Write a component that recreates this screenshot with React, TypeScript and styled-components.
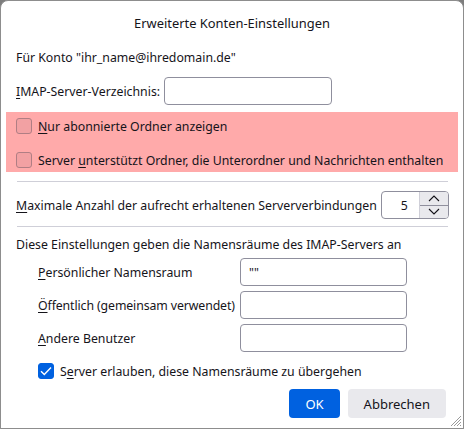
import React from 'react';
import styled, { createGlobalStyle } from 'styled-components';

const GlobalStyle = createGlobalStyle`
  html, body {
    margin: 0;
    padding: 0;
    background: #7d7d7d;
  }
  body {
    font-family: 'Noto Sans', 'Open Sans', sans-serif;
    font-size: 12.3px;
    color: #15141a;
  }
`;

const Window = styled.div`
  position: relative;
  box-sizing: border-box;
  width: 464px;
  height: 429px;
  background: #ffffff;
  border: 1px solid #8d8d8d;
  border-radius: 8px 8px 0 0;
  display: flex;
  flex-direction: column;
  overflow: hidden;
`;

const Title = styled.div`
  height: 43px;
  display: flex;
  align-items: center;
  justify-content: center;
  font-size: 12.9px;
`;

const Content = styled.div`
  display: flex;
  flex-direction: column;
  padding: 0 15px;
`;

const Line = styled.div<{ $height?: number }>`
  height: ${(p) => p.$height ?? 26}px;
  display: flex;
  align-items: center;
  gap: 4px;
  white-space: nowrap;
`;

const Key = styled.span`
  text-decoration: underline;
  text-underline-offset: 2px;
`;

const TextInput = styled.div<{ $width: number }>`
  box-sizing: border-box;
  width: ${(p) => p.$width}px;
  height: 28px;
  border: 1px solid #8f8f9d;
  border-radius: 4px;
  background: #fff;
  display: flex;
  align-items: center;
  padding-left: 8px;
  font-size: 12px;
`;

const Highlight = styled.div`
  box-sizing: border-box;
  height: 60px;
  margin: 7px -10px 0 -10px;
  padding: 2px 10px 0 10px;
  background: #ffaaaa;
  display: flex;
  flex-direction: column;
  gap: 10px;
`;

const CheckRow = styled.label<{ $indent?: boolean }>`
  height: 24px;
  display: flex;
  align-items: center;
  gap: 6px;
  padding-left: ${(p) => (p.$indent ? '22px' : '0')};
  white-space: nowrap;
`;

const Box = styled.span<{ $checked?: boolean }>`
  box-sizing: border-box;
  width: 16px;
  height: 16px;
  border-radius: 3px;
  flex: none;
  display: flex;
  align-items: center;
  justify-content: center;
  border: 1px solid ${(p) => (p.$checked ? '#0061e0' : '#b07e84')};
  background: ${(p) => (p.$checked ? '#0061e0' : '#f2a1a3')};
`;

const Separator = styled.hr<{ $after: number }>`
  border: none;
  border-top: 1px solid #cfcfd8;
  margin: 9px 0 ${(p) => p.$after}px 1px;
`;

const SpinRow = styled.div`
  display: flex;
  align-items: center;
  justify-content: space-between;
  gap: 4px;
  height: 28px;
  white-space: nowrap;
`;

const Spinner = styled.div`
  box-sizing: border-box;
  flex: none;
  width: 68px;
  height: 28px;
  border: 1px solid #8f8f9d;
  border-radius: 4px;
  display: flex;
  overflow: hidden;
`;

const SpinValue = styled.div`
  flex: 1;
  display: flex;
  align-items: center;
  justify-content: flex-end;
  padding-right: 11px;
`;

const SpinButtons = styled.div`
  width: 28px;
  display: flex;
  flex-direction: column;
  border-left: 1px solid #cfcfd8;
`;

const SpinButton = styled.div<{ $top?: boolean }>`
  flex: 1;
  background: #e9e9ed;
  display: flex;
  align-items: center;
  justify-content: center;
  border-bottom: ${(p) => (p.$top ? '1px solid #8f8f9d' : 'none')};
`;

const NamespaceGrid = styled.div`
  display: grid;
  grid-template-columns: 202px 167px;
  row-gap: 5px;
  padding-left: 22px;
  margin-top: 5px;
  align-items: center;
  white-space: nowrap;
`;

const Footer = styled.div`
  display: flex;
  justify-content: flex-end;
  gap: 8px;
  padding-right: 2px;
  margin-top: 6px;
`;

const Button = styled.button<{ $primary?: boolean }>`
  height: 29px;
  border: none;
  border-radius: 4px;
  font-family: inherit;
  font-size: 13px;
  padding: 0 16px;
  background: ${(p) => (p.$primary ? '#0061e0' : '#e9e9ed')};
  color: ${(p) => (p.$primary ? '#ffffff' : '#15141a')};
  min-width: ${(p) => (p.$primary ? '50px' : '98px')};
`;

const Grip = styled.svg`
  position: absolute;
  right: 1px;
  bottom: 1px;
`;

const Chevron = ({ up }: { up?: boolean }) => (
  <svg width="12" height="7" viewBox="0 0 12 7">
    <path
      d={up ? 'M1 6 L6 1 L11 6' : 'M1 1 L6 6 L11 1'}
      fill="none"
      stroke="#15141a"
      strokeWidth="1.1"
    />
  </svg>
);

const Check = () => (
  <svg width="12" height="10" viewBox="0 0 12 10">
    <path d="M1 5.2 L4.3 8.5 L11 1.5" fill="none" stroke="#fff" strokeWidth="1.4" />
  </svg>
);

export default function App() {
  return (
    <>
      <GlobalStyle />
      <Window>
        <Title>Erweiterte Konten-Einstellungen</Title>
        <Content>
          <Line>Für Konto "ihr_name@ihredomain.de"</Line>
          <Line $height={28} style={{ marginTop: 7 }}>
            <span>
              <Key>I</Key>MAP-Server-Verzeichnis:
            </span>
            <TextInput $width={168} />
          </Line>
          <Highlight>
            <CheckRow>
              <Box />
              <span>
                <Key>N</Key>ur abonnierte Ordner anzeigen
              </span>
            </CheckRow>
            <CheckRow>
              <Box />
              <span>
                Server <Key>u</Key>nterstützt Ordner, die Unterordner und Nachrichten enthalten
              </span>
            </CheckRow>
          </Highlight>
          <Separator $after={9} />
          <SpinRow>
            <span>
              <Key>M</Key>aximale Anzahl der aufrecht erhaltenen Serververbindungen
            </span>
            <Spinner>
              <SpinValue>5</SpinValue>
              <SpinButtons>
                <SpinButton $top>
                  <Chevron up />
                </SpinButton>
                <SpinButton>
                  <Chevron />
                </SpinButton>
              </SpinButtons>
            </Spinner>
          </SpinRow>
          <Separator $after={8} style={{ marginTop: 7 }} />
          <Line $height={18}>Diese Einstellungen geben die Namensräume des IMAP-Servers an</Line>
          <NamespaceGrid>
            <span>
              <Key>P</Key>ersönlicher Namensraum
            </span>
            <TextInput $width={167}>""</TextInput>
            <span style={{ letterSpacing: '-0.1px' }}>
              <Key>Ö</Key>ffentlich (gemeinsam verwendet)
            </span>
            <TextInput $width={167} />
            <span>
              <Key>A</Key>ndere Benutzer
            </span>
            <TextInput $width={167} />
          </NamespaceGrid>
          <CheckRow $indent style={{ marginTop: 7 }}>
            <Box $checked>
              <Check />
            </Box>
            <span>
              S<Key>e</Key>rver erlauben, diese Namensräume zu übergehen
            </span>
          </CheckRow>
          <Footer>
            <Button $primary>OK</Button>
            <Button>Abbrechen</Button>
          </Footer>
        </Content>
        <Grip width="14" height="14" viewBox="0 0 14 14">
          <path d="M13 3 L3 13 M13 6 L6 13 M13 9 L9 13 M13 12 L12 13" stroke="#9a9a9a" strokeWidth="1" />
        </Grip>
      </Window>
    </>
  );
}
